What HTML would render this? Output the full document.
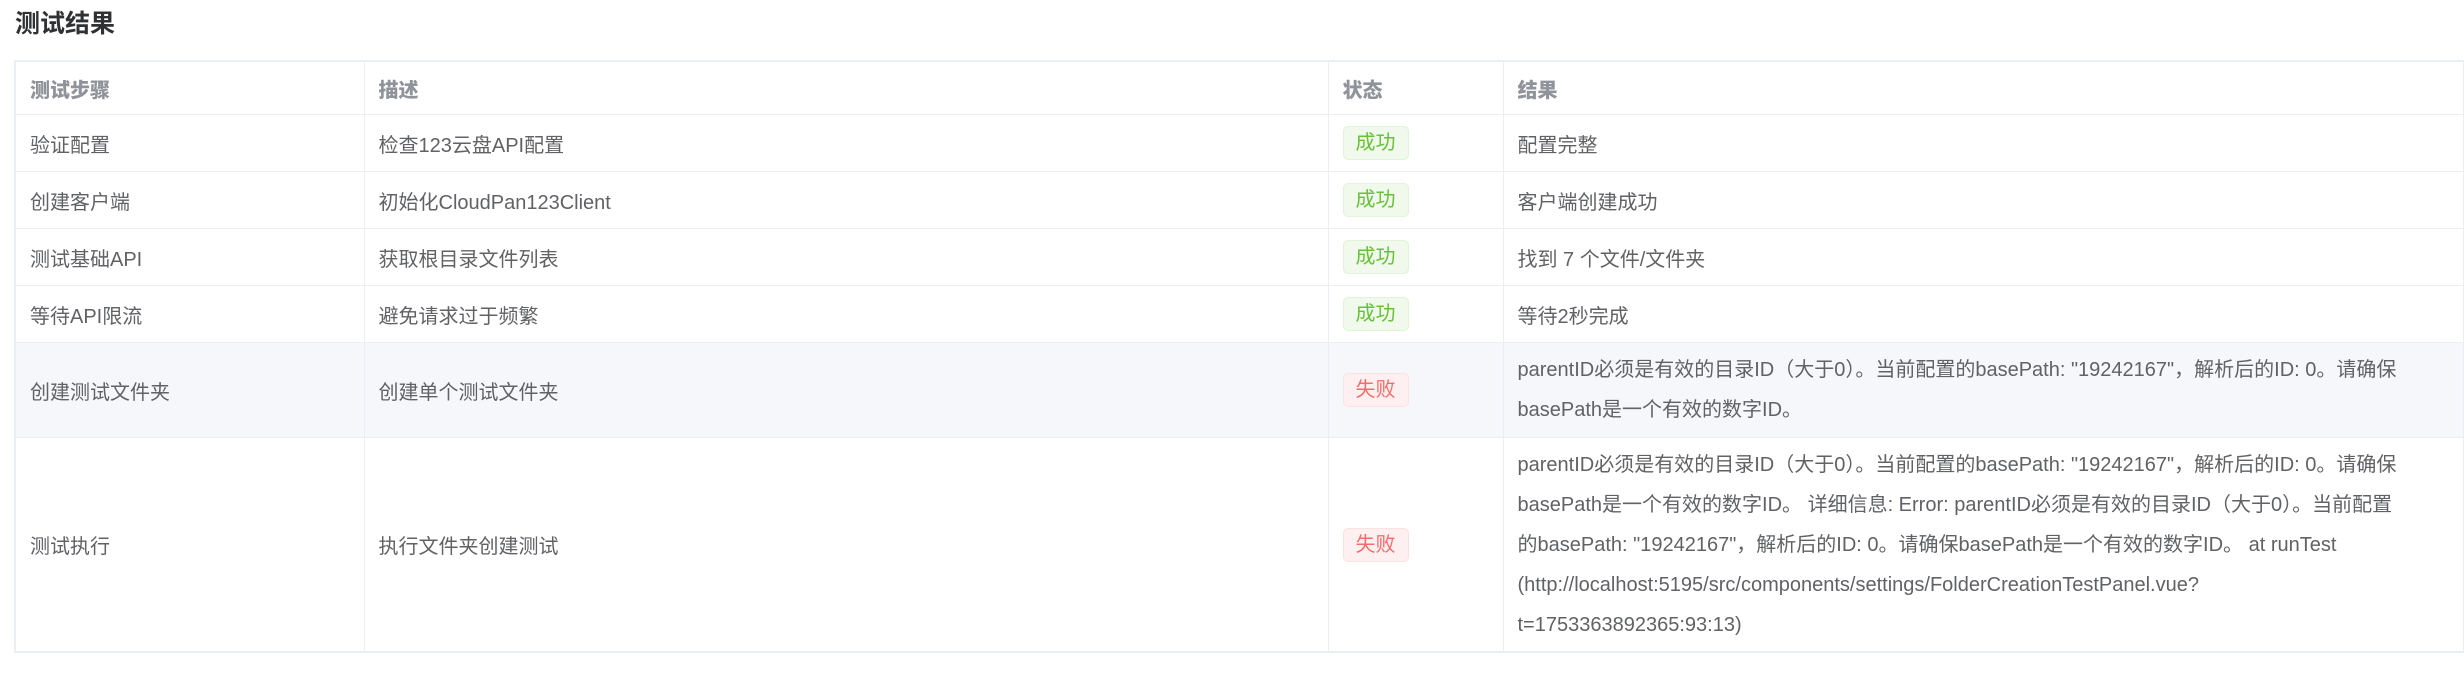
<!DOCTYPE html>
<html><head><meta charset="utf-8"><style>
html,body{margin:0;padding:0;background:#fff;width:2464px;height:682px;overflow:hidden}
body{font-family:"Liberation Sans","Noto Sans CJK SC",sans-serif;color:#606266}
h3{position:absolute;left:15px;top:6px;margin:0;font-size:25px;font-weight:bold;color:#303133;line-height:36px}
table{position:absolute;left:14px;top:60px;width:2450px;border-collapse:collapse;table-layout:fixed;border:2px solid #ebeef5;border-right:none;font-size:20px}
td,th{border:1px solid #ebeef5;padding:0 14px;text-align:left;vertical-align:middle;white-space:nowrap}
th{color:#909399;font-weight:900;height:52px;font-family:"Noto Sans CJK SC",sans-serif}
tr.s td{height:56px}
.res{line-height:40px}
.b{display:inline-block;vertical-align:middle;height:32px;line-height:32px;padding:0 12px;border-radius:5px;font-size:20px;border:1px solid}
.ok{background:#f0f9eb;border-color:#e1f3d8;color:#67c23a}
.no{background:#fef0f0;border-color:#fde2e2;color:#f56c6c}
tr.h td{background:#f5f7fa}
</style></head><body>
<h3>测试结果</h3>
<table>
<colgroup><col style="width:349px"><col style="width:964px"><col style="width:175px"><col></colgroup>
<tr><th>测试步骤</th><th>描述</th><th>状态</th><th>结果</th></tr>
<tr class="s"><td>验证配置</td><td>检查123云盘API配置</td><td><span class="b ok">成功</span></td><td>配置完整</td></tr>
<tr class="s"><td>创建客户端</td><td>初始化CloudPan123Client</td><td><span class="b ok">成功</span></td><td>客户端创建成功</td></tr>
<tr class="s"><td>测试基础API</td><td>获取根目录文件列表</td><td><span class="b ok">成功</span></td><td>找到 7 个文件/文件夹</td></tr>
<tr class="s"><td>等待API限流</td><td>避免请求过于频繁</td><td><span class="b ok">成功</span></td><td>等待2秒完成</td></tr>
<tr class="h"><td style="height:94px">创建测试文件夹</td><td>创建单个测试文件夹</td><td><span class="b no">失败</span></td><td class="res">parentID必须是有效的目录ID（大于0）。当前配置的basePath: "19242167"，解析后的ID: 0。请确保<br>basePath是一个有效的数字ID。</td></tr>
<tr><td style="height:213px">测试执行</td><td>执行文件夹创建测试</td><td><span class="b no">失败</span></td><td class="res">parentID必须是有效的目录ID（大于0）。当前配置的basePath: "19242167"，解析后的ID: 0。请确保<br>basePath是一个有效的数字ID。 详细信息: Error: parentID必须是有效的目录ID（大于0）。当前配置<br>的basePath: "19242167"，解析后的ID: 0。请确保basePath是一个有效的数字ID。 at runTest<br>(http://localhost:5195/src/components/settings/FolderCreationTestPanel.vue?<br>t=1753363892365:93:13)</td></tr>
</table>
</body></html>
